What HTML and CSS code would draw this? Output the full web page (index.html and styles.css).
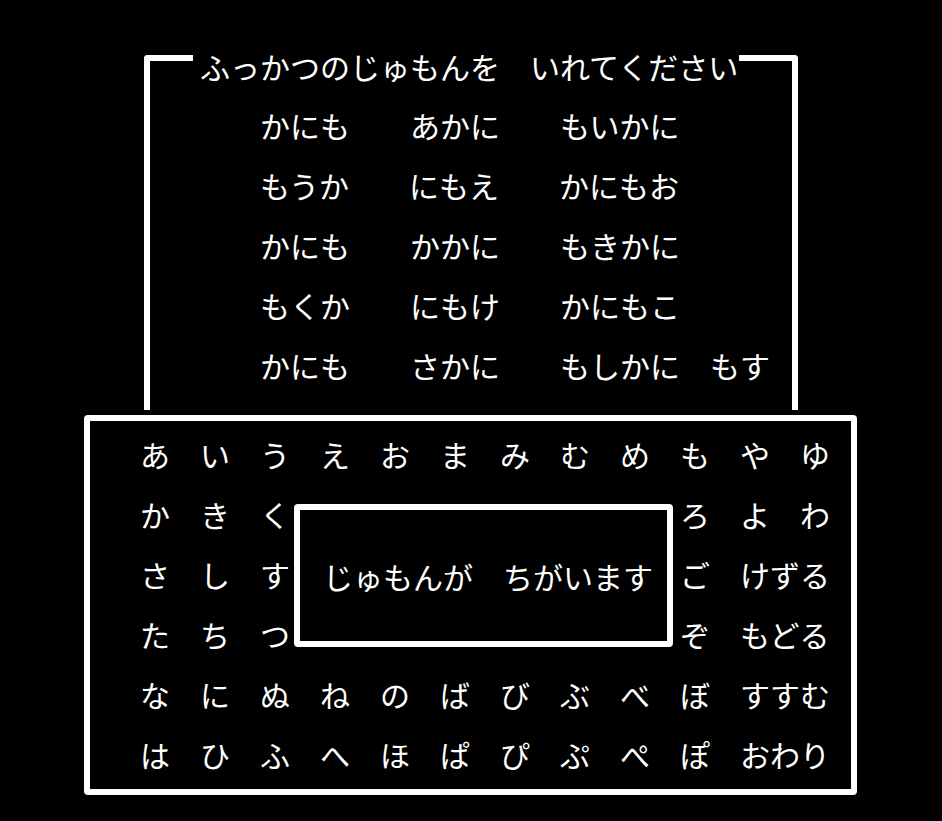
FILE: index.html
```html
<!DOCTYPE html>
<html lang="ja">
<head>
    <meta charset="UTF-8">
    <meta name="viewport" content="width=device-width, initial-scale=1.0">
    <title>ふっかつのじゅもん</title>
    <link rel="stylesheet" href="styles.css">
</head>
<body>
    <div class="screen">
        <div class="spell-panel">
            <div class="spell-title">ふっかつのじゅもんを　いれてください</div>
            <div class="spell-lines">
                <p>かにも　　あかに　　もいかに</p>
                <p>もうか　　にもえ　　かにもお</p>
                <p>かにも　　かかに　　もきかに</p>
                <p>もくか　　にもけ　　かにもこ</p>
                <p>かにも　　さかに　　もしかに　もす</p>
            </div>
        </div>

        <div class="kana-panel">
            <div class="kana-rows">
                <p>あ　い　う　え　お　ま　み　む　め　も　や　ゆ</p>
                <p class="split"><span>か　き　く</span><span>ろ　よ　わ</span></p>
                <p class="split"><span>さ　し　す</span><span>ご　けずる</span></p>
                <p class="split"><span>た　ち　つ</span><span>ぞ　もどる</span></p>
                <p>な　に　ぬ　ね　の　ば　び　ぶ　べ　ぼ　すすむ</p>
                <p>は　ひ　ふ　へ　ほ　ぱ　ぴ　ぷ　ぺ　ぽ　おわり</p>
            </div>

            <div class="message-box">じゅもんが　ちがいます</div>
        </div>
    </div>
</body>
</html>
```

FILE: styles.css
```css
body {
    margin: 0;
    padding: 0;
    background: #000;
    color: #fff;
    font-family: 'Noto Sans CJK JP', sans-serif;
    font-size: 30px;
    overflow: hidden;
}

p {
    margin: 0;
    white-space: pre;
    line-height: 60px;
}

.screen {
    width: 942px;
    height: 821px;
    padding-top: 55px;
    box-sizing: border-box;
}

/* 上のわく：じゅもんの入力欄 */
.spell-panel {
    position: relative;
    box-sizing: border-box;
    margin-left: 144px;
    width: 654px;
    height: 355px;
    border: 6px solid #fff;
    border-bottom: none;
    border-radius: 4px 4px 0 0;
    padding: 34px 0 0 110px;
}

.spell-title {
    position: absolute;
    top: -25px;
    left: 43px;
    padding: 0 1px 0 7px;
    background: #000;
    line-height: 60px;
    white-space: pre;
}

/* 下のわく：かなの表 */
.kana-panel {
    position: relative;
    box-sizing: border-box;
    margin-top: 5px;
    margin-left: 84px;
    width: 773px;
    height: 380px;
    border: 6px solid #fff;
    border-radius: 4px;
    padding: 3px 0 0 50px;
}

.split {
    display: flex;
    gap: 390px;
}

.message-box {
    position: absolute;
    top: 83px;
    left: 204px;
    width: 379px;
    height: 143px;
    box-sizing: border-box;
    border: 6px solid #fff;
    border-radius: 4px;
    background: #000;
    display: flex;
    align-items: center;
    padding-left: 23px;
    white-space: pre;
    line-height: 60px;
}
```
